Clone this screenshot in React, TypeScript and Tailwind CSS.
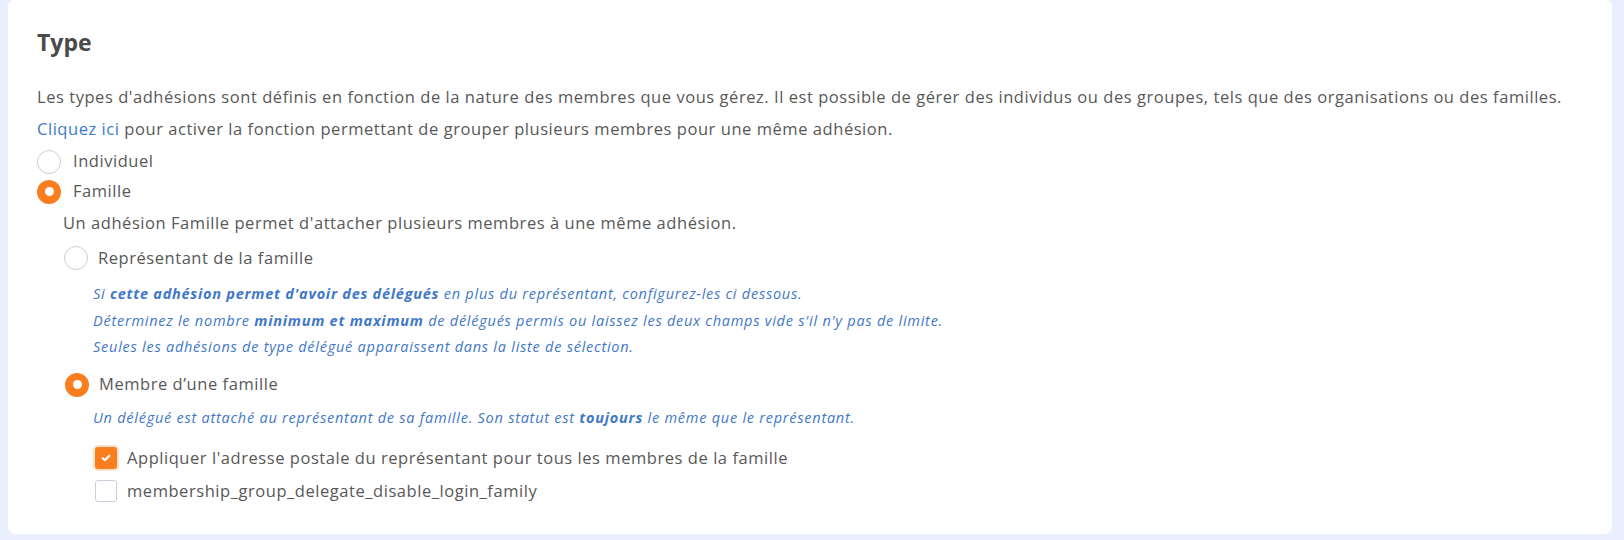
const font = { fontFamily: '"Open Sans", "Noto Sans", sans-serif' };

function Radio({ checked }: { checked: boolean }) {
  return checked ? (
    <span className="flex h-[24px] w-[24px] shrink-0 items-center justify-center rounded-full bg-[#fa7d1e]">
      <span className="h-[9px] w-[9px] rounded-full bg-white" />
    </span>
  ) : (
    <span className="h-[24px] w-[24px] shrink-0 rounded-full border border-[#c9d0dc] bg-white" />
  );
}

function Check({ checked }: { checked: boolean }) {
  return checked ? (
    <span className="flex h-[22px] w-[22px] shrink-0 items-center justify-center rounded-[3px] bg-[#fa7d1e] ring-2 ring-[#fde1c9]">
      <svg width="12" height="12" viewBox="0 0 12 12" fill="none">
        <path d="M2.8 6.2l2.2 2.1 4.3-4.6" stroke="white" strokeWidth="2.2" strokeLinecap="round" strokeLinejoin="round" />
      </svg>
    </span>
  ) : (
    <span className="h-[22px] w-[22px] shrink-0 rounded-[3px] border border-[#c9d0dc] bg-white" />
  );
}

export default function App() {
  return (
    <div className="h-[540px] w-full bg-[#e9effc] pl-[8px] pr-[12px]" style={font}>
      <div className="h-[534px] rounded-b-[8px] rounded-t-[6px] bg-white pl-[29px] pr-[20px] pt-[26px] text-[16.5px] tracking-[0.55px] text-[#585858]">
        <h2 className="text-[23px] font-bold leading-[32px] tracking-normal text-[#4a4a4a]">Type</h2>

        <p className="mt-[23px] leading-[32px]">
          Les types d'adhésions sont définis en fonction de la nature des membres que vous gérez. Il est possible de gérer des individus ou des groupes, tels que des organisations ou des familles.
        </p>
        <p className="leading-[32px]">
          <a className="text-[#3b7bc8]">Cliquez ici</a> pour activer la fonction permettant de grouper plusieurs membres pour une même adhésion.
        </p>

        <label className="flex h-[31px] items-center gap-[12px] pt-[2px]">
          <Radio checked={false} />
          <span>Individuel</span>
        </label>
        <label className="flex h-[31px] items-center gap-[12px]">
          <Radio checked={true} />
          <span>Famille</span>
        </label>

        <div className="pl-[26px]">
          <p className="leading-[31px]">Un adhésion Famille permet d'attacher plusieurs membres à une même adhésion.</p>

          <label className="mt-[3px] flex h-[34px] items-center gap-[10px] pl-[1px]">
            <Radio checked={false} />
            <span>Représentant de la famille</span>
          </label>
          <div className="mt-[6px] pl-[30px] text-[14.5px] italic leading-[26.5px] tracking-[0.75px] text-[#3f78c6]">
            <p>
              Si <b className="font-bold">cette adhésion permet d'avoir des délégués</b> en plus du représentant, configurez-les ci dessous.
            </p>
            <p>
              Déterminez le nombre <b className="font-bold">minimum et maximum</b> de délégués permis ou laissez les deux champs vide s'il n'y pas de limite.
            </p>
            <p>Seules les adhésions de type délégué apparaissent dans la liste de sélection.</p>
          </div>

          <label className="mt-[7px] flex h-[34px] items-center gap-[10px] pl-[2px]">
            <Radio checked={true} />
            <span>Membre d’une famille</span>
          </label>
          <p className="mt-[3px] pl-[30px] text-[14.5px] italic leading-[26px] tracking-[0.75px] text-[#3f78c6]">
            Un délégué est attaché au représentant de sa famille. Son statut est <b className="font-bold">toujours</b> le même que le représentant.
          </p>

          <div className="mt-[11px] pl-[32px]">
            <label className="flex h-[33px] items-center gap-[10px]">
              <Check checked={true} />
              <span>Appliquer l'adresse postale du représentant pour tous les membres de la famille</span>
            </label>
            <label className="flex h-[33px] items-center gap-[10px]">
              <Check checked={false} />
              <span>membership_group_delegate_disable_login_family</span>
            </label>
          </div>
        </div>
      </div>
    </div>
  );
}
